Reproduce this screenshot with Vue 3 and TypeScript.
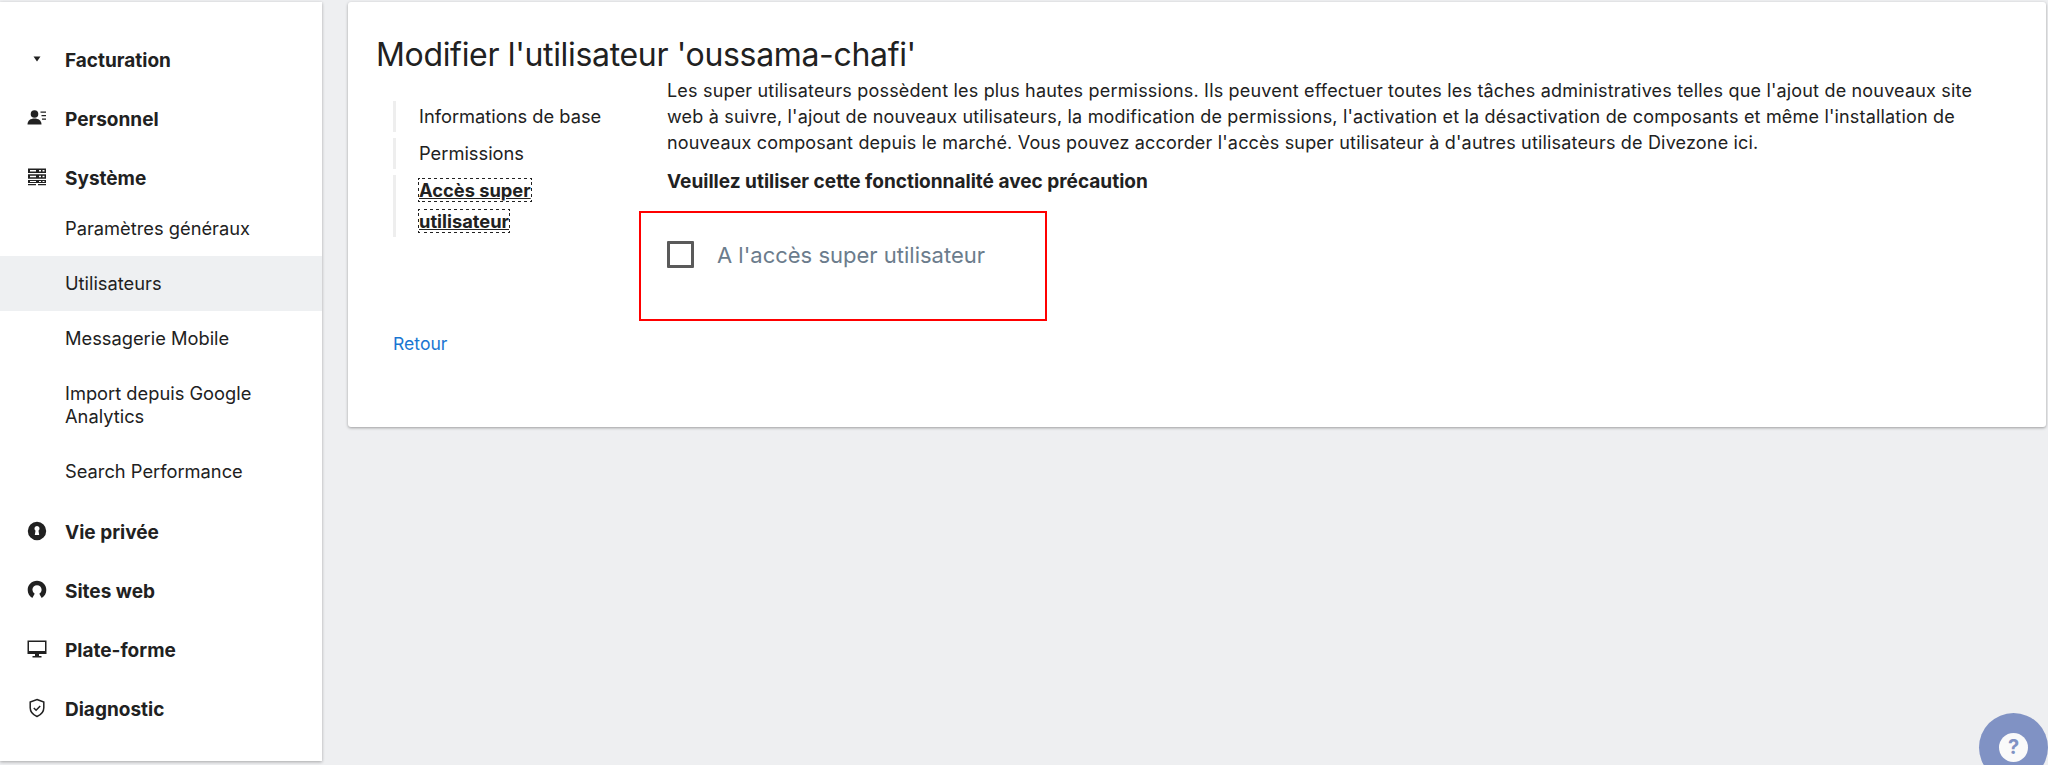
<script setup lang="ts">
const tabs = ["Informations de base", "Permissions", "Accès super utilisateur"]
const subItems = ["Paramètres généraux", "Utilisateurs", "Messagerie Mobile", "Import depuis Google Analytics", "Search Performance"]
</script>

<template>
  <div class="page">
    <aside class="sidebar">
      <nav class="nav">
        <a class="group">
          <svg class="icon" viewBox="0 0 20 20"><path d="M6.5 7.5h7L10 12.5z" /></svg>
          Facturation
        </a>
        <a class="group">
          <svg class="icon" viewBox="0 0 20 20">
            <circle cx="7.5" cy="6" r="3.8" />
            <path d="M0.5 16.5c0-4 3-6 7-6s7 2 7 6z" />
            <path d="M13.5 3.5h5.5v1.3h-5.500zM14.500 7h4.500v1.300h-4.500zM15 10.500h4v1.300h-4z" />
          </svg>
          Personnel
        </a>
        <a class="group">
          <svg class="icon" viewBox="0 0 20 20">
            <path fill-rule="evenodd" d="M1 1.500h18v4.500H1zM3 3v1.500h6V3zM12 3v1.500h2V3zM15.500 3v1.500h2V3z" />
            <path fill-rule="evenodd" d="M1 7.200h18v4.500H1zM3 8.700v1.500h6V8.700zM12 8.700v1.500h2V8.700zM15.500 8.700v1.500h2V8.700z" />
            <path fill-rule="evenodd" d="M1 12.900h18v3H1zM3 14v1h6v-1zM12 14v1h2v-1zM15.500 14v1h2v-1z" />
            <path d="M1 17h8v1.200H1zM11 17h8v1.200h-8z" />
          </svg>
          Système
        </a>
        <div class="subs">
          <a v-for="item in subItems" :key="item" class="sub" :class="{ selected: item === 'Utilisateurs' }">
            {{ item }}
          </a>
        </div>
        <a class="group">
          <svg class="icon" viewBox="0 0 20 20">
            <path fill-rule="evenodd" d="M10 .8a9.200 9.200 0 1 0 0 18.400a9.200 9.200 0 0 0 0-18.400zM10 5a2.600 2.600 0 0 1 1.500 4.700l.7 4.300H7.800l.7-4.300A2.600 2.600 0 0 1 10 5z" />
          </svg>
          Vie privée
        </a>
        <a class="group">
          <svg class="icon" viewBox="0 0 20 20">
            <path d="M10 .8C4.800.8.700 4.900.700 10c0 3.400 1.800 6.400 4.600 8l2.400-4.300a4.700 4.700 0 0 1-2.300-3.900c0-2.600 2-4.500 4.600-4.500s4.600 1.900 4.600 4.500c0 1.700-.9 3.100-2.300 3.900l2.400 4.300c2.800-1.600 4.600-4.600 4.600-8 0-5.100-4.100-9.200-9.300-9.200z" />
          </svg>
          Sites web
        </a>
        <a class="group">
          <svg class="icon" viewBox="0 0 20 20">
            <path fill-rule="evenodd" d="M.5 1.500h19v13.500H.5zM2 3v10.500h16V3z" />
            <path d="M1 12h18v3H1zM8 15h4v2h2.500v1.500h-9V17H8z" />
          </svg>
          Plate-forme
        </a>
        <a class="group">
          <svg class="icon" viewBox="0 0 20 20">
            <path class="line" d="M10 1.500l6.800 2.500v5.800c0 4-2.800 7-6.800 8.700c-4-1.700-6.800-4.700-6.800-8.700V4z" />
            <path class="line" d="M6.800 10l2.300 2.300l4.100-4.300" />
          </svg>
          Diagnostic
        </a>
      </nav>
    </aside>

    <main class="main">
      <section class="card">
        <h1>Modifier l'utilisateur 'oussama-chafi'</h1>
        <div class="columns">
          <div class="left">
            <ul class="tabs">
              <li v-for="tab in tabs" :key="tab" :class="{ active: tab === tabs[2] }">
                <a>{{ tab }}</a>
              </li>
            </ul>
            <a class="back">Retour</a>
          </div>
          <div class="content">
            <p class="intro">Les super utilisateurs possèdent les plus hautes permissions. Ils peuvent effectuer toutes les tâches administratives telles que l'ajout de nouveaux site web à suivre, l'ajout de nouveaux utilisateurs, la modification de permissions, l'activation et la désactivation de composants et même l'installation de nouveaux composant depuis le marché. Vous pouvez accorder l'accès super utilisateur à d'autres utilisateurs de Divezone ici.</p>
            <p class="warning">Veuillez utiliser cette fonctionnalité avec précaution</p>
            <div class="highlight">
              <label class="check">
                <span class="box"></span>
                A l'accès super utilisateur
              </label>
            </div>
          </div>
        </div>
      </section>
    </main>

    <div class="help"><span class="help-inner">?</span></div>
  </div>
</template>

<style>
html, body {
  margin: 0;
  overflow: hidden;
  background: #eeeff1;
}
</style>

<style scoped>
.page {
  display: flex;
  align-items: flex-start;
  gap: 26px;
  width: 2048px;
  height: 765px;
  overflow: hidden;
  position: relative;
  background: #eeeff1;
  font-family: Inter, "Liberation Sans", sans-serif;
  color: #212121;
}

.sidebar {
  flex: none;
  width: 322px;
  height: 759px;
  margin-top: 2px;
  background: #fff;
  box-shadow: 0 1px 3px rgba(0, 0, 0, 0.3);
}

.nav {
  display: flex;
  flex-direction: column;
  padding-top: 29px;
}

.group {
  display: flex;
  align-items: center;
  height: 59px;
  padding-left: 27px;
  font-size: 19px;
  font-weight: 700;
}

.icon {
  flex: none;
  width: 20px;
  height: 20px;
  margin: -3px 18px 0 0;
  fill: #212121;
}

.icon .line {
  fill: none;
  stroke: #212121;
  stroke-width: 1.500;
}

.subs {
  margin: -7px 0 4px;
}

.sub {
  display: block;
  padding: 16px 20px 16px 65px;
  font-size: 18.3px;
  line-height: 23px;
}

.sub.selected {
  background: #eef0f2;
}

.main {
  flex: 1;
  min-width: 0;
  padding-top: 2px;
  padding-right: 2px;
}

.card {
  height: 425px;
  box-sizing: border-box;
  padding: 30px 28px 0;
  background: #fff;
  border-radius: 3px;
  box-shadow: 0 1px 3px rgba(0, 0, 0, 0.35);
}

h1 {
  margin: 0;
  font-size: 32px;
  font-weight: 400;
  letter-spacing: -0.33px;
  line-height: 46px;
}

.columns {
  display: flex;
}

.left {
  flex: none;
  width: 263px;
  padding-left: 17px;
  box-sizing: border-box;
}

.tabs {
  list-style: none;
  margin: 0;
  padding: 23px 0 0;
}

.tabs li {
  border-left: 3px solid #eeeeee;
  padding: 0 20px 0 23px;
  margin-bottom: 6px;
  font-size: 18.3px;
  line-height: 31px;
}

.tabs .active a {
  font-weight: 700;
  text-decoration: underline;
  outline: 1px dotted #212121;
}

.back {
  display: block;
  margin-top: 96px;
  font-size: 17.6px;
  color: #1976d2;
}

.content {
  flex: 1;
  min-width: 0;
  padding-right: 40px;
  font-size: 18px;
  line-height: 26px;
}

.intro {
  margin: 0 0 0 28px;
  letter-spacing: 0.18px;
}

.warning {
  margin: 13px 0 0 28px;
  font-size: 19.05px;
  font-weight: 700;
}

.highlight {
  width: 404px;
  height: 106px;
  margin-top: 16px;
  border: 2px solid #ff0000;
}

.check {
  display: flex;
  align-items: center;
  gap: 23px;
  padding: 28px 0 0 26px;
  font-size: 22px;
  line-height: 26px;
  color: #6b7c8c;
}

.box {
  width: 21px;
  height: 21px;
  border: 3px solid #5a5a5a;
  border-radius: 1px;
}

.help {
  position: absolute;
  left: 1979px;
  top: 713px;
  width: 69px;
  height: 69px;
  border-radius: 50%;
  background: #8092c4;
  display: flex;
  align-items: center;
  justify-content: center;
}

.help-inner {
  width: 29px;
  height: 29px;
  border-radius: 50%;
  background: #fafafa;
  color: #8092c4;
  font-size: 20px;
  font-weight: 700;
  line-height: 29px;
  text-align: center;
}
</style>
